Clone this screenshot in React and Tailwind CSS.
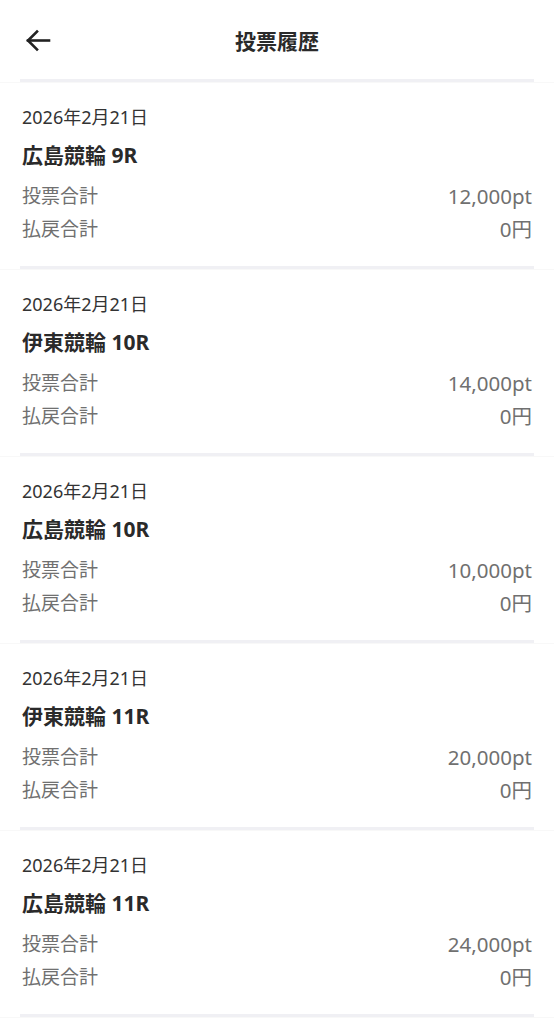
const records = [
  { date: '2026年2月21日', race: '広島競輪 9R', bet: '12,000pt', payout: '0円' },
  { date: '2026年2月21日', race: '伊東競輪 10R', bet: '14,000pt', payout: '0円' },
  { date: '2026年2月21日', race: '広島競輪 10R', bet: '10,000pt', payout: '0円' },
  { date: '2026年2月21日', race: '伊東競輪 11R', bet: '20,000pt', payout: '0円' },
  { date: '2026年2月21日', race: '広島競輪 11R', bet: '24,000pt', payout: '0円' },
];

function Separator() {
  return (
    <div className="border-b border-[#f8f8f8]">
      <div className="mx-5 h-[3px] bg-[#f0f0f4]" />
    </div>
  );
}

function RecordCard({ record }) {
  return (
    <div>
      <Separator />
      <div className="px-[22px] pt-[22px] pb-[20px]">
        <div className="h-6 text-[18px] leading-6 text-[#333]">{record.date}</div>
        <div className="mt-3 h-7 text-[21px] font-bold leading-7 text-[#2a2a2a]">{record.race}</div>
        <div className="mt-[11px] flex h-[33px] items-center justify-between text-[#707070]">
          <span className="text-[19px]">投票合計</span>
          <span className="text-[20.5px]">{record.bet}</span>
        </div>
        <div className="flex h-[33px] items-center justify-between text-[#707070]">
          <span className="text-[19px]">払戻合計</span>
          <span className="text-[20.5px]">{record.payout}</span>
        </div>
      </div>
    </div>
  );
}

export default function App() {
  return (
    <div
      className="min-h-screen w-full bg-white"
      style={{ fontFamily: '"Noto Sans", "Noto Sans CJK JP", sans-serif' }}
    >
      <header className="relative flex h-[79px] items-center justify-center">
        <button className="absolute left-[24px] top-[27px] flex h-7 w-7 items-center justify-center">
          <svg width="28" height="28" viewBox="0 0 28 28" fill="none" stroke="#222" strokeWidth="2.6" strokeLinecap="square">
            <path d="M4 13.5H25" />
            <path d="M13 4.5L4 13.5L13 22.5" />
          </svg>
        </button>
        <h1 className="mt-1 text-[21px] font-bold text-[#2a2a2a]">投票履歴</h1>
      </header>
      <main>
        {records.map((r, i) => (
          <RecordCard key={i} record={r} />
        ))}
        <Separator />
      </main>
    </div>
  );
}
